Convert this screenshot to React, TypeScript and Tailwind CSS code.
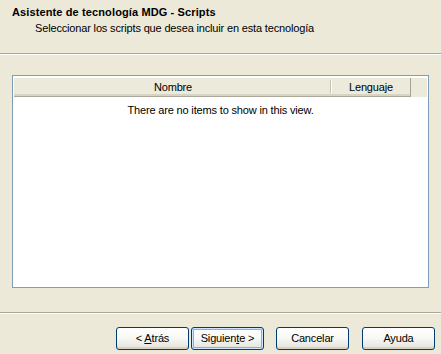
import React from 'react';

const buttons = [
  { id: 'back', label: <>&lt; <u>A</u>trás</>, isDefault: false },
  { id: 'next', label: <>Siguien<u>t</u>e &gt;</>, isDefault: true },
  { id: 'cancel', label: <>Cancelar</>, isDefault: false },
  { id: 'help', label: <>Ayuda</>, isDefault: false },
];

export default function App() {
  return (
    <div className="w-[441px] h-[354px] bg-[#ECE9D8] flex flex-col font-['Liberation_Sans',Arial,sans-serif] text-[11px] text-black tracking-[-0.16px] overflow-hidden">
      {/* header */}
      <div className="h-[53px] pl-[12px] pt-[5px] leading-[14px]">
        <div className="font-bold tracking-[0.12px]">Asistente de tecnología MDG - Scripts</div>
        <div className="pl-[23px] mt-[2px]">Seleccionar los scripts que desea incluir en esta tecnología</div>
      </div>
      <div className="h-px bg-[#ACA899]" />
      <div className="h-px bg-white" />

      {/* list */}
      <div className="flex-1 px-[12px] pt-[20px] pb-[24px] flex">
        <div className="flex-1 border border-[#7F9DB9] bg-white p-px flex flex-col">
          <div className="h-[20px] flex border-t border-white">
            <ColumnHeader className="w-[318px]" label="Nombre" />
            <ColumnHeader className="w-[79px] border-r border-r-[#A7A391]" label="Lenguaje" last />
            <div className="flex-1 bg-[#EBEADB]" />
          </div>
          <div className="text-center pt-[7px] leading-[13px]">There are no items to show in this view.</div>
        </div>
      </div>

      <div className="h-px bg-[#ACA899]" />
      <div className="h-px bg-white" />

      {/* buttons */}
      <div className="h-[40px] flex justify-end items-start pt-[13px] pr-[6px]">
        {buttons.map((b, i) => (
          <button
            key={b.id}
            className={
              'w-[73px] h-[23px] rounded-[3px] border border-[#003C74] bg-gradient-to-b from-white via-[#F7F7F3] to-[#E3E2DA] leading-none ' +
              (b.isDefault ? 'shadow-[inset_0_0_0_1px_#CEE7FF,inset_0_0_0_2px_#89ADE4] ' : 'shadow-[inset_0_-2px_0_#D6D0C5] ') +
              (i === 1 ? 'ml-[2px]' : i === 2 ? 'ml-[12px]' : i === 3 ? 'ml-[13px]' : '')
            }
          >
            {b.label}
          </button>
        ))}
      </div>
    </div>
  );
}

function ColumnHeader({ label, className = '', last = false }: { label: string; className?: string; last?: boolean }) {
  return (
    <div className={'relative flex items-center justify-center bg-[#EBEADB] border-b border-b-[#ACA899] shadow-[inset_0_-2px_0_#D8D4C4] ' + className}>
      {label}
      {!last && (
        <div className="absolute right-0 top-[2px] bottom-[3px] w-[2px] flex">
          <div className="w-px bg-[#C7C5B2]" />
          <div className="w-px bg-white" />
        </div>
      )}
    </div>
  );
}
